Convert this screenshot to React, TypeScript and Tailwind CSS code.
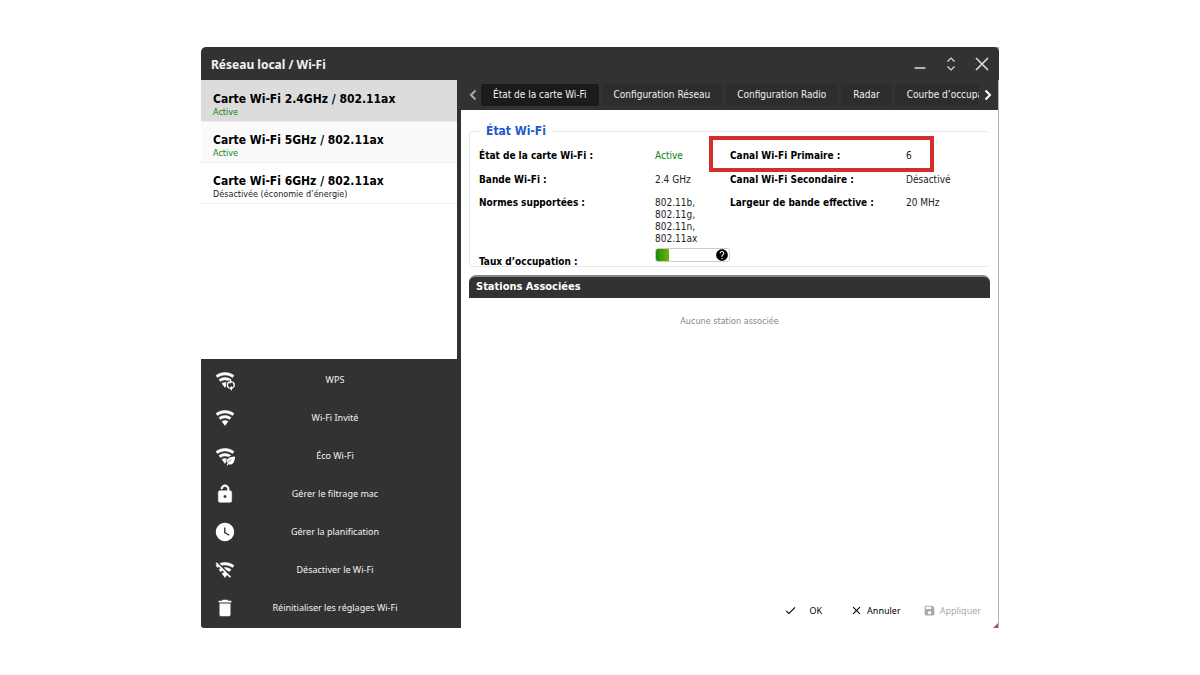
import React from "react";
import { MdCheck, MdClose, MdDelete, MdHelp, MdSave, MdWatchLater } from "react-icons/md";

const cards = [
  { name: "Carte Wi-Fi 2.4GHz / 802.11ax", state: "Active", on: true, box: "bg-[#dcdcdc]" },
  { name: "Carte Wi-Fi 5GHz / 802.11ax", state: "Active", on: true, box: "bg-[#fafafa]" },
  { name: "Carte Wi-Fi 6GHz / 802.11ax", state: "Désactivée (économie d’énergie)", on: false, box: "bg-white" },
];

const WIFI =
  "M12,21L15.6,16.2C14.6,15.45 13.35,15 12,15C10.65,15 9.4,15.45 8.4,16.2L12,21M12,3C7.95,3 4.21,4.34 1.2,6.6L3,9C5.5,7.12 8.62,6 12,6C15.38,6 18.5,7.12 21,9L22.8,6.6C19.79,4.34 16.05,3 12,3M12,9C9.3,9 6.81,9.89 4.8,11.4L6.6,13.8C8.1,12.67 9.97,12 12,12C14.03,12 15.9,12.67 17.4,13.8L19.2,11.4C17.19,9.89 14.7,9 12,9Z";
const WIFI_OFF =
  "M2.28,3L1,4.27L2.47,5.74C2.04,6 1.61,6.29 1.2,6.6L3,9C3.53,8.6 4.08,8.25 4.66,7.93L6.89,10.16C6.15,10.5 5.44,10.91 4.8,11.4L6.6,13.8C7.38,13.22 8.26,12.77 9.2,12.47L11.75,15C10.5,15.07 9.34,15.5 8.4,16.2L12,21L14.46,17.73L17.74,21L19,19.72M12,3C9.85,3 7.8,3.38 5.9,4.07L8.29,6.47C9.5,6.16 10.72,6 12,6C15.38,6 18.5,7.11 21,9L22.8,6.6C19.79,4.34 16.06,3 12,3M12,9C11.62,9 11.25,9 10.88,9.05L14.07,12.25C15.29,12.53 16.43,13.07 17.4,13.8L19.2,11.4C17.2,9.89 14.7,9 12,9Z";
const LOCK =
  "M18,8A2,2 0 0,1 20,10V20A2,2 0 0,1 18,22H6A2,2 0 0,1 4,20V10A2,2 0 0,1 6,8H15V6A3,3 0 0,0 9,6H7A5,5 0 0,1 17,6V8H18M12,17A2,2 0 0,0 14,15A2,2 0 0,0 12,13A2,2 0 0,0 10,15A2,2 0 0,0 12,17Z";

function Glyph({ d, children }: { d: string; children?: React.ReactNode }) {
  return (
    <svg viewBox="0 0 24 24" className="size-5 overflow-visible" fill="currentColor" aria-hidden="true">
      <path d={d} stroke="currentColor" strokeWidth="0.6" strokeLinejoin="round" />
      {children}
    </svg>
  );
}

const actions = [
  {
    label: "WPS",
    icon: (
      <Glyph d={WIFI}>
        <circle cx="19" cy="18" r="6" fill="#323232" />
        <path d="M17,21.6A4.1,4.1 0 0 1 17.6,14.1M21,14.4A4.1,4.1 0 0 1 20.4,21.9" fill="none" stroke="currentColor" strokeWidth="1.7" />
        <path d="M17.6,11.2L21,14L17.6,16.8ZM20.4,19.2L17,22L20.4,24.8Z" />
      </Glyph>
    ),
  },
  { label: "Wi-Fi Invité", icon: <Glyph d={WIFI} /> },
  {
    label: "Éco Wi-Fi",
    icon: (
      <Glyph d={WIFI}>
        <path d="M24.5,11C16,11 13,15 13.4,19L12,22.5L14,23.5C20,24 24.5,20 24.5,11Z" fill="#323232" />
        <path d="M24,12.5C17,13 14,15.5 14,18.5C14,19.4 14.3,20 14.7,20.6C16,18.3 18,16.8 20.5,16C17.5,17.8 15.3,20 14,23L15.2,23.4L15.9,22C21.5,23.6 24,18.5 24,12.5Z" />
      </Glyph>
    ),
  },
  { label: "Gérer le filtrage mac", icon: <Glyph d={LOCK} /> },
  { label: "Gérer la planification", icon: <MdWatchLater className="size-[22px]" /> },
  { label: "Désactiver le Wi-Fi", icon: <Glyph d={WIFI_OFF} /> },
  { label: "Réinitialiser les réglages Wi-Fi", icon: <MdDelete className="size-[22px]" /> },
];

const tabs = ["État de la carte Wi-Fi", "Configuration Réseau", "Configuration Radio", "Radar", "Courbe d’occupation"];

function Chevron({ d }: { d: string }) {
  return (
    <svg viewBox="0 0 8 12" className="h-3 w-2" fill="none" stroke="currentColor" strokeWidth="2" aria-hidden="true">
      <path d={d} />
    </svg>
  );
}

function Label({ children }: { children: string }) {
  return <dt className="font-bold whitespace-nowrap text-black">{children}</dt>;
}

export default function App() {
  return (
    <main className="flex min-h-screen items-center justify-center bg-white font-['DejaVu_Sans_Condensed','DejaVu_Sans',sans-serif] text-[10px] text-[#222]">
      <div className="relative w-full max-w-[798px]">
        <span className="absolute top-0 right-0 size-2 bg-[#e08a8a]" />
        <section className="relative flex flex-col overflow-hidden rounded-t-[5px] rounded-bl-[3px] bg-[#323232]">
          <header className="flex h-[33px] items-center pr-[9px] pl-[10px] text-[#f2f2f2]">
            <h1 className="grow pt-[2px] font-['Noto_Sans',sans-serif] text-[12px] font-bold">Réseau local / Wi-Fi</h1>
            <div className="flex items-center gap-[15px] text-[#ddd]">
              <button aria-label="Réduire">
                <svg viewBox="0 0 16 16" className="size-4" stroke="currentColor" strokeWidth="1.6"><path d="M2.5 12H13.5" /></svg>
              </button>
              <button aria-label="Agrandir">
                <svg viewBox="0 0 16 16" className="size-4" fill="none" stroke="currentColor" strokeWidth="1.2"><path d="M4.5 5.5L8 2L11.5 5.5M4.5 10.5L8 14L11.5 10.5" /></svg>
              </button>
              <button aria-label="Fermer">
                <svg viewBox="0 0 16 16" className="size-4" stroke="currentColor" strokeWidth="1.6"><path d="M2 2L14 14M14 2L2 14" /></svg>
              </button>
            </div>
          </header>
          <div className="flex">
            <aside className="flex w-[260px] shrink-0 flex-col">
              <ul className="mr-1 min-h-[279px] grow bg-white">
                {cards.map((c) => (
                  <li key={c.name} className={`border-b border-[#eee] first:pt-px ${c.box}`}>
                    <button className="flex h-10 w-full flex-col items-start justify-end pb-[3px] pl-3 text-left">
                      <span className="text-[12px] leading-[14px] font-bold text-black">{c.name}</span>
                      <span className={`text-[9px] leading-3 ${c.on ? "text-[#0a850a]" : "text-[#222]"}`}>{c.state}</span>
                    </button>
                  </li>
                ))}
              </ul>
              <ul className="pt-[2px] pb-px font-['Noto_Sans',sans-serif] text-[9px] text-[#f2f2f2]">
                {actions.map((a) => (
                  <li key={a.label}>
                    <button className="flex h-[38px] w-full items-center">
                      <span className="flex w-12 shrink-0 justify-center text-white">{a.icon}</span>
                      <span className="grow pr-10 text-center">{a.label}</span>
                    </button>
                  </li>
                ))}
              </ul>
            </aside>

            <div className="relative flex min-w-0 grow flex-col border-r border-[#c9a9a9]">
              <nav className="flex h-[30px] items-center gap-1 pr-[5px] pb-px">
                <button aria-label="Onglets précédents" className="flex w-4 shrink-0 justify-center pl-2 text-[#aaa]">
                  <Chevron d="M6.5 1.5L2 6L6.5 10.5" />
                </button>
                <div role="tablist" className="flex min-w-0 grow gap-[3px] overflow-hidden">
                  {tabs.map((t, i) => (
                    <button key={t} role="tab" aria-selected={i === 0} className={`h-[22px] shrink-0 rounded-[3px] px-3 whitespace-nowrap text-[#f0f0f0] ${i === 0 ? "bg-[#1b1b1b]" : "bg-[#2d2d2d]"}`}>
                      {t}
                    </button>
                  ))}
                </div>
                <button aria-label="Onglets suivants" className="flex w-[10px] shrink-0 justify-center text-white">
                  <Chevron d="M1.5 1.5L6 6L1.5 10.5" />
                </button>
              </nav>

              <div className="flex grow flex-col bg-white px-2 pt-3">
                <fieldset className="h-[145px] rounded-[4px] border border-r-0 border-[#e8e8e8] pl-[9px]">
                  <legend className="ml-px px-[6px] text-[12px] leading-[18px] font-bold text-[#2457d0]">État Wi-Fi</legend>
                  <dl className="grid grid-cols-[176px_75px_176px_1fr] pt-[10px] leading-3">
                    <Label>État de la carte Wi-Fi :</Label>
                    <dd className="text-[#0a850a]">Active</dd>
                    <div className="relative col-span-2 grid grid-cols-subgrid pb-3">
                      <Label>Canal Wi-Fi Primaire :</Label>
                      <dd>6</dd>
                      <span className="absolute -top-[14px] -left-[21px] h-[36px] w-[225px] border-4 border-[#d22f2c]" />
                    </div>
                    <Label>Bande Wi-Fi :</Label>
                    <dd className="pb-[11px]">2.4 GHz</dd>
                    <Label>Canal Wi-Fi Secondaire :</Label>
                    <dd>Désactivé</dd>
                    <Label>Normes supportées :</Label>
                    <dd>
                      802.11b,
                      <br />
                      802.11g,
                      <br />
                      802.11n,
                      <br />
                      802.11ax
                    </dd>
                    <Label>Largeur de bande effective :</Label>
                    <dd>20 MHz</dd>
                    <dt className="-mb-2 pt-[11px] font-bold text-black">Taux d’occupation :</dt>
                    <dd className="pt-[3px]">
                      <div className="flex h-[14px] items-center justify-between rounded-[3px] border border-[#ccc] bg-white">
                        <span className="h-full w-[13px] rounded-l-[2px] bg-linear-to-r from-[#168a08] to-[#6ab509]" />
                        <MdHelp className="size-[14px] text-black" />
                      </div>
                    </dd>
                  </dl>
                </fieldset>
                <h2 className="mt-2 flex h-[23px] items-center rounded-t-[7px] border-t-2 border-[#888] bg-[#323232] pl-[7px] text-[11px] font-bold text-white">
                  Stations Associées
                </h2>
                <p className="grow pt-[17px] text-center text-[9px] text-[#888]">Aucune station associée</p>
                <footer className="flex h-9 items-center justify-end gap-[22px] pt-px pr-[9px] font-['Noto_Sans',sans-serif] text-[9px] text-black">
                  <button className="mr-[6px] flex items-center gap-3"><MdCheck className="size-[13px]" />OK</button>
                  <button className="flex items-center gap-1"><MdClose className="size-[13px]" />Annuler</button>
                  <button disabled className="flex items-center gap-1 text-[#aaa]"><MdSave className="size-[13px]" />Appliquer</button>
                </footer>
              </div>
              <svg viewBox="0 0 5 5" className="absolute right-0 bottom-0 size-[5px]" aria-hidden="true"><path d="M5 0V5H0Z" fill="#9c5a5a" /></svg>
            </div>
          </div>
        </section>
      </div>
    </main>
  );
}
